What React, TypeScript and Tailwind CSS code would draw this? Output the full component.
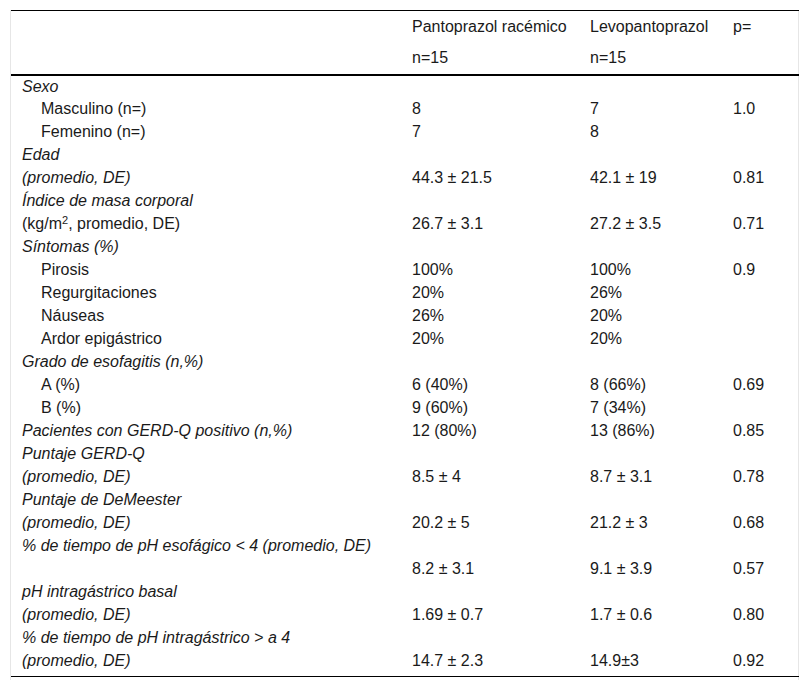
import React from 'react'

type Row = {
    label: React.ReactNode
    italic?: boolean
    indent?: boolean
    a?: string
    b?: string
    p?: string
}

const rows: Row[] = [
    { label: 'Sexo', italic: true },
    { label: 'Masculino (n=)', indent: true, a: '8', b: '7', p: '1.0' },
    { label: 'Femenino (n=)', indent: true, a: '7', b: '8' },
    { label: 'Edad', italic: true },
    { label: '(promedio, DE)', italic: true, a: '44.3 ± 21.5', b: '42.1 ± 19', p: '0.81' },
    { label: 'Índice de masa corporal', italic: true },
    {
        label: (
            <>
                (kg/m<sup className="text-[11px]">2</sup>, promedio, DE)
            </>
        ),
        a: '26.7 ± 3.1',
        b: '27.2 ± 3.5',
        p: '0.71'
    },
    { label: 'Síntomas (%)', italic: true },
    { label: 'Pirosis', indent: true, a: '100%', b: '100%', p: '0.9' },
    { label: 'Regurgitaciones', indent: true, a: '20%', b: '26%' },
    { label: 'Náuseas', indent: true, a: '26%', b: '20%' },
    { label: 'Ardor epigástrico', indent: true, a: '20%', b: '20%' },
    { label: 'Grado de esofagitis (n,%)', italic: true },
    { label: 'A (%)', indent: true, a: '6 (40%)', b: '8 (66%)', p: '0.69' },
    { label: 'B (%)', indent: true, a: '9 (60%)', b: '7 (34%)' },
    { label: 'Pacientes con GERD-Q positivo (n,%)', italic: true, a: '12 (80%)', b: '13 (86%)', p: '0.85' },
    { label: 'Puntaje GERD-Q', italic: true },
    { label: '(promedio, DE)', italic: true, a: '8.5 ± 4', b: '8.7 ± 3.1', p: '0.78' },
    { label: 'Puntaje de DeMeester', italic: true },
    { label: '(promedio, DE)', italic: true, a: '20.2 ± 5', b: '21.2 ± 3', p: '0.68' },
    { label: '% de tiempo de pH esofágico < 4 (promedio, DE)', italic: true },
    { label: '', a: '8.2 ± 3.1', b: '9.1 ± 3.9', p: '0.57' },
    { label: 'pH intragástrico basal', italic: true },
    { label: '(promedio, DE)', italic: true, a: '1.69 ± 0.7', b: '1.7 ± 0.6', p: '0.80' },
    { label: '% de tiempo de pH intragástrico > a 4', italic: true },
    { label: '(promedio, DE)', italic: true, a: '14.7 ± 2.3', b: '14.9±3', p: '0.92' }
]

export default function App() {
    return (
        <div className="bg-white min-h-[691px] pt-[10px] pl-[10px] font-['Liberation_Sans',Arial,sans-serif] text-[16px] leading-[20px] text-[#1a1a1a]">
            <div className="w-[789px] border-x border-[#e6e6e6] pb-[3px]">
                <table className="w-[788px] table-fixed border-collapse">
                    <colgroup>
                        <col className="w-[389px]" />
                        <col className="w-[178px]" />
                        <col className="w-[143px]" />
                        <col className="w-[78px]" />
                    </colgroup>
                    <thead>
                        <tr className="h-[32px] border-t border-black">
                            <th />
                            <th className="pl-3 pt-[1px] text-left font-normal">Pantoprazol racémico</th>
                            <th className="pl-3 pt-[1px] text-left font-normal">Levopantoprazol</th>
                            <th className="pl-3 pt-[1px] text-left font-normal">p=</th>
                        </tr>
                        <tr className="h-[32px] border-b-2 border-black">
                            <th />
                            <th className="pl-3 text-left font-normal">n=15</th>
                            <th className="pl-3 text-left font-normal">n=15</th>
                            <th />
                        </tr>
                    </thead>
                    <tbody className="border-b border-black">
                        {rows.map((row, i) => (
                            <tr key={i} className="h-[23px]">
                                <td
                                    className={`whitespace-nowrap ${row.indent ? 'pl-[30px]' : 'pl-[11px]'} ${row.italic ? 'italic' : ''}`}
                                >
                                    {row.label}
                                </td>
                                <td className="pl-3">{row.a}</td>
                                <td className="pl-3">{row.b}</td>
                                <td className="pl-3">{row.p}</td>
                            </tr>
                        ))}
                        <tr className="h-[4px]">
                            <td colSpan={4} />
                        </tr>
                    </tbody>
                </table>
            </div>
        </div>
    )
}
